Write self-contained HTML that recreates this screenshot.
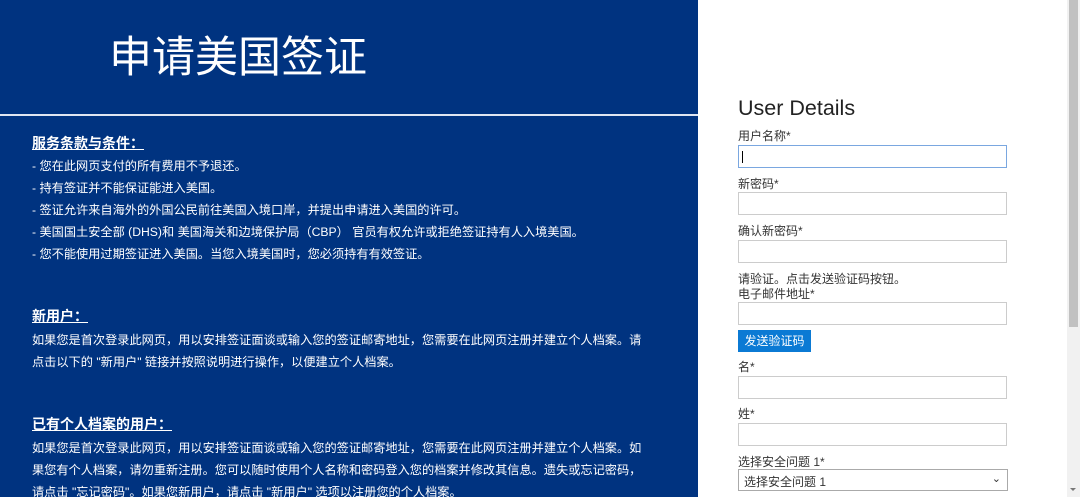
<!DOCTYPE html>
<html><head><meta charset="utf-8"><style>
*{margin:0;padding:0;box-sizing:border-box}
body{width:1080px;height:497px;overflow:hidden;position:relative;background:#fff;font-family:"Liberation Sans","Noto Sans CJK SC",sans-serif}
#left{position:absolute;left:0;top:0;width:698px;height:497px;background:#003380;color:#fff}
#left .t{position:absolute;left:109px;top:30px;font-size:43px;line-height:56px}
#left .hr{position:absolute;left:0;top:114px;width:698px;height:2px;background:#dfe6f2}
.p{position:absolute;left:32px;font-size:12.2px;line-height:22px;white-space:nowrap}
.h{font-weight:bold;text-decoration:underline;font-size:14px}
#right .l{position:absolute;left:738px;font-size:12px;color:#333;white-space:nowrap}
#right .i{position:absolute;left:738px;width:269px;height:23px;border:1px solid #ccc;background:#fff}
.sb{position:absolute;left:1067px;top:0;width:13px;height:497px;background:#f1f1f1}
.th{position:absolute;left:1069px;top:0;width:9px;height:327px;background:#c1c1c1}
</style></head><body>
<div id="left">
<div class="t">申请美国签证</div>
<div class="hr"></div>
<div class="p h" style="top:132px">服务条款与条件：</div>
<div class="p" style="top:155px">- 您在此网页支付的所有费用不予退还。<br>- 持有签证并不能保证能进入美国。<br>- 签证允许来自海外的外国公民前往美国入境口岸，并提出申请进入美国的许可。<br>- 美国国土安全部 (DHS)和 美国海关和边境保护局（CBP） 官员有权允许或拒绝签证持有人入境美国。<br>- 您不能使用过期签证进入美国。当您入境美国时，您必须持有有效签证。</div>
<div class="p h" style="top:305px">新用户：</div>
<div class="p" style="top:329px">如果您是首次登录此网页，用以安排签证面谈或输入您的签证邮寄地址，您需要在此网页注册并建立个人档案。请<br>点击以下的 "新用户" 链接并按照说明进行操作，以便建立个人档案。</div>
<div class="p h" style="top:413px">已有个人档案的用户：</div>
<div class="p" style="top:437px">如果您是首次登录此网页，用以安排签证面谈或输入您的签证邮寄地址，您需要在此网页注册并建立个人档案。如<br>果您有个人档案，请勿重新注册。您可以随时使用个人名称和密码登入您的档案并修改其信息。遗失或忘记密码，<br>请点击 "忘记密码"。如果您新用户，请点击 "新用户" 选项以注册您的个人档案。</div>
</div>
<div id="right">
<div class="l" style="top:96px;font-size:21.5px;color:#222">User Details</div>
<div class="l" style="top:127px">用户名称*</div>
<div class="i" style="top:145px;border-color:#7aa7e0"><div style="position:absolute;left:3px;top:5px;width:1px;height:12px;background:#000"></div></div>
<div class="l" style="top:175px">新密码*</div>
<div class="i" style="top:192px"></div>
<div class="l" style="top:222px">确认新密码*</div>
<div class="i" style="top:240px"></div>
<div class="l" style="top:270px">请验证。点击发送验证码按钮。</div>
<div class="l" style="top:285px">电子邮件地址*</div>
<div class="i" style="top:302px"></div>
<div class="l" style="top:330px;width:73px;height:22px;background:#0b7ad4;color:#fff;text-align:center;line-height:22px">发送验证码</div>
<div class="l" style="top:358px">名*</div>
<div class="i" style="top:376px"></div>
<div class="l" style="top:405px">姓*</div>
<div class="i" style="top:423px"></div>
<div class="l" style="top:453px">选择安全问题 1*</div>
<div class="i" style="top:469px;width:270px;height:22px;border-color:#aaa;font-size:12px;padding:3px 5px;color:#333">选择安全问题 1<span style="position:absolute;right:6px;top:2px;font-size:11px">⌄</span></div>
</div>
<div class="sb"></div><div class="th"></div>
<div style="position:absolute;left:1070px;top:488px;width:0;height:0;border-left:3px solid transparent;border-right:3px solid transparent;border-top:3px solid #777"></div>
</body></html>
